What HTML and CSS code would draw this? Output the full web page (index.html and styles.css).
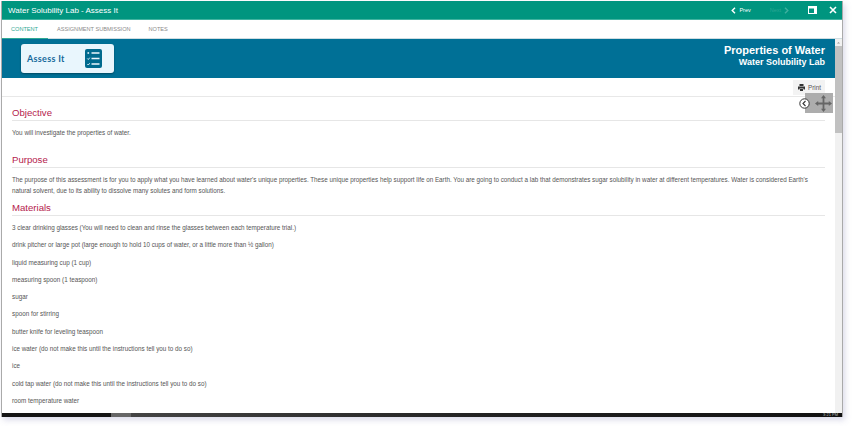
FILE: index.html
```html
<!DOCTYPE html>
<html lang="en">
<head>
<meta charset="utf-8">
<title>Water Solubility Lab - Assess It</title>
<link rel="stylesheet" href="styles.css">
</head>
<body>
<div class="window">
  <header class="titlebar">
    <div class="title">Water Solubility Lab - Assess It</div>
    <nav class="pager">
      <span class="pager-item"><svg width="5" height="7" viewBox="0 0 5 7"><path d="M4 .7 1.200 3.500 4 6.300" fill="none" stroke="#fff" stroke-width="1.400"/></svg>Prev</span>
      <span class="pager-item pager-off">Next<svg width="5" height="7" viewBox="0 0 5 7"><path d="M1 .7 3.800 3.500 1 6.300" fill="none" stroke="#3fb09f" stroke-width="1.400"/></svg></span>
    </nav>
    <svg class="win-icon" width="9" height="8" viewBox="0 0 9 8"><path d="M0 0h9v8H0z" fill="#fff"/><path d="M1 2.500h5v4.500H1z" fill="#00957f"/></svg>
    <svg class="close-icon" width="8" height="8" viewBox="0 0 8 8"><path d="M1 1l6 6M7 1 1 7" stroke="#fff" stroke-width="1.600"/></svg>
  </header>
  <div class="tabs">
    <div class="tab tab-active">CONTENT</div>
    <div class="tab">ASSIGNMENT SUBMISSION</div>
    <div class="tab">NOTES</div>
  </div>
  <div class="body">
    <main class="content">
      <div class="banner">
        <div class="badge">
          <span class="badge-text">Assess It</span>
          <svg width="17" height="19" viewBox="0 0 17 19"><rect width="17" height="19" rx="2" fill="#006a8e"/><path d="M6.500 4h8M6.500 9.500h8M6.500 15h8" stroke="#eaf6fd" stroke-width="1.300"/><path d="M2.500 3.200h1.600v1.600H2.500z" fill="#eaf6fd"/><path d="M2.300 9.500l1 1 1.400-1.800M2.300 15l1 1 1.400-1.800" fill="none" stroke="#eaf6fd" stroke-width=".9"/></svg>
        </div>
        <div class="banner-titles">
          <div class="banner-title">Properties of Water</div>
          <div class="banner-sub">Water Solubility Lab</div>
        </div>
      </div>
      <div class="printbar">
        <div class="print"><svg width="7" height="7" viewBox="0 0 7 7"><path d="M1.500 0h4v2h-4zM0 2.500h7V5.500H5.500V4.500h-4v1H0zM2 5h3v2H2z" fill="#333"/></svg>Print</div>
      </div>
      <article class="article">
        <h2 class="heading heading-first">Objective</h2>
        <p class="para">You will investigate the properties of water.</p>
        <h2 class="heading heading-purpose">Purpose</h2>
        <p class="para">The purpose of this assessment is for you to apply what you have learned about water's unique properties. These unique properties help support life on Earth. You are going to conduct a lab that demonstrates sugar solubility in water at different temperatures. Water is considered Earth's natural solvent, due to its ability to dissolve many solutes and form solutions.</p>
        <h2 class="heading heading-materials">Materials</h2>
        <ul class="items">
          <li>3 clear drinking glasses (You will need to clean and rinse the glasses between each temperature trial.)</li>
          <li>drink pitcher or large pot (large enough to hold 10 cups of water, or a little more than ½ gallon)</li>
          <li>liquid measuring cup (1 cup)</li>
          <li>measuring spoon (1 teaspoon)</li>
          <li>sugar</li>
          <li>spoon for stirring</li>
          <li>butter knife for leveling teaspoon</li>
          <li>ice water (do not make this until the instructions tell you to do so)</li>
          <li>ice</li>
          <li>cold tap water (do not make this until the instructions tell you to do so)</li>
          <li>room temperature water</li>
        </ul>
      </article>
    </main>
    <div class="scrollbar">
      <svg class="scroll-up" width="7" height="7" viewBox="0 0 7 7"><path d="M3.500 3 5 4.600H2z" fill="#999"/></svg>
      <div class="thumb"></div>
    </div>
    <div class="overlay">
      <svg class="back" width="11" height="11" viewBox="0 0 11 11"><circle cx="5.500" cy="5.500" r="4.700" fill="#fff" stroke="#333" stroke-width="1"/><path d="M6.500 3 4 5.500 6.500 8" fill="none" stroke="#333" stroke-width="1.100"/></svg>
      <div class="move"><svg width="17" height="17" viewBox="0 0 17 17"><path d="M8.500 0 11 3.200H9.400v4.400H13.800V6L17 8.500 13.800 11V9.400H9.400v4.400H11L8.500 17 6 13.800h1.600V9.400H3.200V11L0 8.500 3.200 6v1.600h4.400V3.200H6z" fill="#666"/></svg></div>
    </div>
  </div>
  <div class="taskbar"><div class="taskbar-a"></div><div class="taskbar-b"></div><div class="taskbar-c"><span class="clock">3:21 PM</span></div></div>
</div>
</body>
</html>
```

FILE: styles.css
```css
* { box-sizing: border-box; }
html, body { margin: 0; height: 100%; background: #fff; overflow: hidden; }
body { padding: 1px 0 0 1px; font-family: "Liberation Sans", Arial, sans-serif; }
.window {
  width: 842px; height: 416px; display: flex; flex-direction: column;
  background: #fff; border-left: 1px solid #aaa; border-right: 1px solid #aaa;
  box-shadow: 2px 3px 6px rgba(110, 110, 170, .25);
}
.titlebar {
  height: 19px; flex: none; display: flex; align-items: center; padding: 0 5px 0 6px;
  background: #00957f; color: #fff; border-bottom: 1px solid #41b3a0;
}
.title { font-size: 8px; flex: 1; }
.pager { display: flex; gap: 19px; margin-right: 19px; font-size: 5.500px; }
.pager-item { display: flex; align-items: center; gap: 3px; }
.pager-off { color: #2aa693; }
.win-icon { margin-right: 12px; }
.tabs { height: 19px; flex: none; display: flex; background: #fff; font-size: 5.600px; color: #8a8a8a; border-bottom: 1px solid #cfdde2; }
.tab { padding: 0 9px 0 8px; line-height: 18px; margin-right: 1px; }
.tab-active { color: #2fa894; border-bottom: 1px solid #2fa894; height: 19px; width: 46px; padding: 0 0 0 9px; }
.body { position: relative; flex: 1; min-height: 0; display: flex; overflow: hidden; }
.content { flex: 1; min-width: 0; overflow: hidden; }
.scrollbar { width: 7px; flex: none; background: #f1f1f1; }
.scroll-up { display: block; }
.thumb { height: 87px; background: #c1c1c1; }
.banner {
  height: 39px; display: flex; justify-content: space-between; background: #007096;
  padding: 5px 10px 0 19px;
}
.badge {
  width: 93px; height: 29px; display: flex; align-items: center; justify-content: space-between;
  padding: 0 12px 0 6px; border-radius: 3px; background: #e9f6fd; box-shadow: 0 1px 2px rgba(0, 0, 0, .35);
}
.badge-text { font-family: Lato, sans-serif; font-size: 9px; font-weight: 700; color: #14689a; letter-spacing: .3px; }
.banner-titles { text-align: right; color: #fff; font-weight: 700; }
.banner-title { font-size: 11px; line-height: 12px; }
.banner-sub { font-size: 9px; line-height: 13px; }
.printbar { height: 19px; display: flex; justify-content: flex-end; padding: 2px 10px 0 0; border-bottom: 1px solid #e8e8e8; }
.print {
  width: 32px; height: 15px; display: flex; align-items: center; gap: 3px; padding-left: 5px;
  background: #f3f3f3; color: #555; font-size: 6.300px;
}
.article { padding: 0 10px; }
.heading {
  margin: 0; height: 16px; font-size: 9.600px; line-height: 16px; font-weight: 400; color: #b5214d;
  border-bottom: 1px solid #e6e6e6;
}
.heading-first { margin-top: 8px; }
.heading-purpose { margin-top: 14.300px; }
.heading-materials { margin-top: 4px; }
.para { margin: 0; padding-top: 5.500px; font-size: 6.300px; line-height: 11.200px; color: #555; }
.items { margin: 0; padding: 3px 0 0; list-style: none; font-size: 6.300px; line-height: 17.300px; color: #555; }
.overlay { position: absolute; top: 54px; right: 9px; display: flex; align-items: center; }
.back { margin-right: -5px; position: relative; z-index: 1; }
.move { width: 28px; height: 20px; display: flex; align-items: center; padding-left: 10px; background: #adadad; }
.taskbar { height: 4px; flex: none; display: flex; }
.taskbar-a { width: 109px; background: #151515; }
.taskbar-b { width: 20px; background: #666; }
.taskbar-c { flex: 1; background: linear-gradient(90deg, #444, #222 50%, #111); display: flex; justify-content: flex-end; padding-right: 4px; }
.clock { color: #bbb; font-size: 4px; line-height: 4px; }
```
